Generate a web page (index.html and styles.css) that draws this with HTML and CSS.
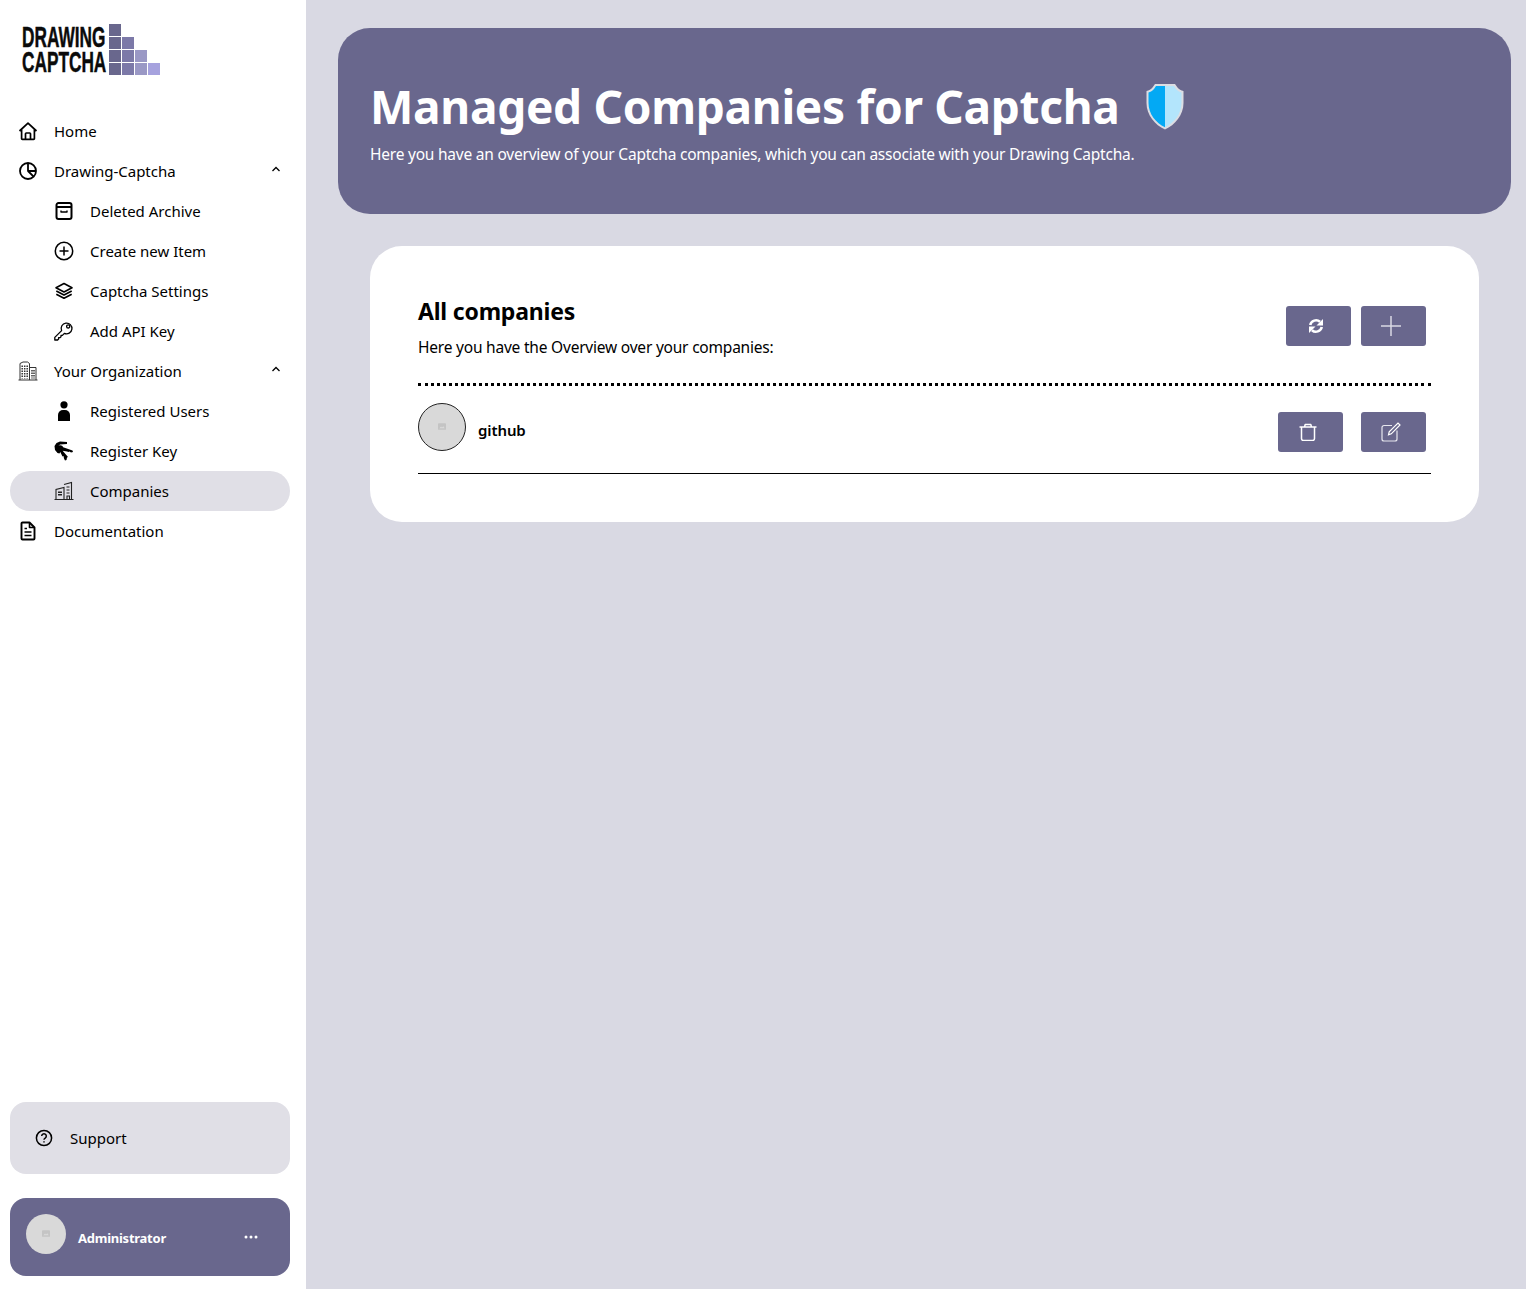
FILE: index.html
```html
<!DOCTYPE html>
<html lang="en">
<head>
<meta charset="utf-8">
<title>Managed Companies for Captcha</title>
<link rel="stylesheet" href="styles.css">
</head>
<body>
<div class="app">
  <aside class="sidebar">
    <div class="logo">
      <div class="logo-text"><span>DRAWING</span><span>CAPTCHA</span></div>
      <div class="logo-grid">
        <i class="c1"></i><i></i><i></i><i></i>
        <i class="c1"></i><i class="c2"></i><i></i><i></i>
        <i class="c1"></i><i class="c2"></i><i class="c3"></i><i></i>
        <i class="c1"></i><i class="c2"></i><i class="c3"></i><i class="c4"></i>
      </div>
    </div>
    <nav class="nav">
      <a class="item">
        <svg class="icon" viewBox="0 0 20 20" fill="none" stroke="#000" stroke-width="1.7" stroke-linejoin="round"><path d="M1.5 10 10 2.2 18.5 10M3.6 8.2V17.5a.8.8 0 0 0 .8.8h11.2a.8.8 0 0 0 .8-.8V8.2"/><path d="M7.5 18v-5.2a.8.8 0 0 1 .8-.8h3.4a.8.8 0 0 1 .8.8V18"/></svg>
        <span>Home</span>
      </a>
      <a class="item">
        <svg class="icon" viewBox="0 0 20 20" fill="none" stroke="#000" stroke-width="1.8" stroke-linejoin="round"><circle cx="10" cy="10" r="8"/><path d="M10 2v8h8M10 10l5.6 5.7"/></svg>
        <span>Drawing-Captcha</span>
        <svg class="chev" viewBox="0 0 10 6" fill="none" stroke="#000" stroke-width="1.3"><path d="M1.5 5 5 1.5 8.5 5"/></svg>
      </a>
      <a class="item sub">
        <svg class="icon" viewBox="0 0 20 20" fill="none" stroke="#000" stroke-width="2" stroke-linejoin="round"><path d="M4.500 2h11a2 2 0 0 1 2 2v12a2 2 0 0 1-2 2h-11a2 2 0 0 1-2-2V4a2 2 0 0 1 2-2Z"/><path d="M2.500 6h15"/><path d="M7 9.500v1.500h6V9.500" stroke-width="1.400"/></svg>
        <span>Deleted Archive</span>
      </a>
      <a class="item sub">
        <svg class="icon" viewBox="0 0 20 20" fill="none" stroke="#000" stroke-width="1.5"><circle cx="10" cy="10" r="8.7"/><path d="M10 5.5v9M5.5 10h9"/></svg>
        <span>Create new Item</span>
      </a>
      <a class="item sub">
        <svg class="icon" viewBox="0 0 20 20" fill="none" stroke="#000" stroke-width="1.6" stroke-linejoin="round"><path d="M10 2.500 18 6.800 10 11 2 6.800Z"/><path d="M2.300 10 10 14l7.700-4M2.300 13.200l7.700 4 7.700-4"/></svg>
        <span>Captcha Settings</span>
      </a>
      <a class="item sub">
        <svg class="icon" viewBox="0 0 20 20" fill="none" stroke="#000" stroke-width="1.300" stroke-linejoin="round"><path d="M7.600 9.600 .8 16.400v2.600h2.800l1-1v-1.400h1.500l.9-.9v-1.300h1.400l2-2a5.400 5.400 0 1 0-2.800-2.800Z"/><circle cx="14.200" cy="5.400" r="1.600"/></svg>
        <span>Add API Key</span>
      </a>
      <a class="item">
        <svg class="icon" viewBox="0 0 20 20" fill="none" stroke="#333" stroke-width="1"><path d="M2 19V2.500L5 1h4.500L11.500 2.500V19M11.500 6.500h6.500V19M.5 19h19"/><path stroke-dasharray="1.500 1" d="M4.200 4.500v13M6.700 4.500v13M9.200 4.500v13M14 9v8.500M16 9v8.500" stroke-width="1.500"/></svg>
        <span>Your Organization</span>
        <svg class="chev" viewBox="0 0 10 6" fill="none" stroke="#000" stroke-width="1.3"><path d="M1.500 5 5 1.500 8.500 5"/></svg>
      </a>
      <a class="item sub">
        <svg class="icon" viewBox="0 0 20 20"><circle cx="10" cy="3.800" r="3.600"/><path d="M4 20v-6a5 5 0 0 1 5-5h2a5 5 0 0 1 5 5v6Z"/></svg>
        <span>Registered Users</span>
      </a>
      <a class="item sub">
        <svg class="icon" viewBox="0 0 20 20"><path d="M13 1 6 .5 2.500 2 .5 5 1 9l2.500 3 2 .5L7 9.500 4.500 8 4 5.500 6 3.500l7-.500Z"/><circle cx="6" cy="7.500" r="3.200"/><path d="M7 5.500 18.500 9.500l.5 1.500-2 .5-1.500-1-1 .5-1.500-.5L7 9.500Z"/><path d="M5.500 9.500 8 9l6 7-1 .5-.5 2.500-1.500 .5-1-2-.5-2.500-1 .5Z"/></svg>
        <span>Register Key</span>
      </a>
      <a class="item sub active">
        <svg class="icon" viewBox="0 0 20 20" fill="none" stroke="#222" stroke-width="1.100"><path d="M.5 18.500h19M2 18V8.500L10 6.500V18M10 3.500 17.500 1.500V18M12.500 6h3M12.500 9h3M12.500 12h3M13 18v-3h2.500v3"/><path stroke-dasharray="1.500 1" stroke-width="4" d="M6 10.500v5"/></svg>
        <span>Companies</span>
      </a>
      <a class="item">
        <svg class="icon" viewBox="0 0 20 20" fill="none" stroke="#000" stroke-width="1.900" stroke-linejoin="round"><path d="M4.500 1.500h7l5 5v11a1 1 0 0 1-1 1h-11a1 1 0 0 1-1-1v-15a1 1 0 0 1 1-1Z"/><path d="M11.500 2v4.500H16M6.500 7.500h2.500M6.500 11h7M6.500 14.500h7" stroke-width="1.600"/></svg>
        <span>Documentation</span>
      </a>
    </nav>
    <div class="support">
      <svg class="help" viewBox="0 0 18 18" fill="none" stroke="#000" stroke-width="1.500"><circle cx="9" cy="9" r="7.600"/><path d="M6.700 7.100a2.300 2.300 0 1 1 3.500 2c-.8.500-1.200.9-1.200 1.700"/><path d="M9 12.300v1.300"/></svg>
      <span>Support</span>
    </div>
    <div class="user">
      <div class="avatar small">
        <svg class="ph" viewBox="0 0 12 10"><rect width="12" height="10" rx="1" fill="#c4c4c4"/><path d="M2 7.500 4.500 5l1.500 1.500L8 4.500l2 3Z" fill="#dadada"/></svg>
      </div>
      <strong>Administrator</strong>
      <svg class="dots" viewBox="0 0 14 4"><circle cx="2" cy="2" r="1.500"/><circle cx="7" cy="2" r="1.500"/><circle cx="12" cy="2" r="1.500"/></svg>
    </div>
  </aside>
  <main class="main">
    <header class="hero">
      <div class="hero-title">
        <h1>Managed Companies for Captcha</h1>
        <svg class="shield" viewBox="0 0 38 47">
          <path d="M9 1h20l2.500 3.500c1.500 1.800 3.500 2.800 6 3.500V20C37.500 32 29 42 19 46.500 9 42 .5 32 .5 20V8c2.500-.7 4.500-1.700 6-3.500Z" fill="#dcdde3"/>
          <path d="M19 3H10L8 6C6.500 8 4.500 9 2.500 9.500V20C2.500 31 10 40 19 44.300Z" fill="#03a9f4"/>
          <path d="M19 3h9l2 3c1.500 2 3.500 3 5.500 3.500V20C35.500 31 28 40 19 44.300Z" fill="#b3e5fc"/>
        </svg>
      </div>
      <p>Here you have an overview of your Captcha companies, which you can associate with your Drawing Captcha.</p>
    </header>
    <section class="card">
      <div class="card-head">
        <div>
          <h2>All companies</h2>
          <p>Here you have the Overview over your companies:</p>
        </div>
        <div class="actions top">
          <button class="btn" type="button">
            <svg class="i16" viewBox="0 0 16 16" fill="none" stroke="#fff" stroke-width="2.600"><path d="M2.200 7A6 6 0 0 1 12 3.800"/><path d="M13.800 9A6 6 0 0 1 4 12.200"/><path d="M15 1v6.500H8.500Z" fill="#fff" stroke="none"/><path d="M1 15V8.500H7.500Z" fill="#fff" stroke="none"/></svg>
          </button>
          <button class="btn" type="button">
            <svg class="i20" viewBox="0 0 20 20" fill="none" stroke="#d9d9e3" stroke-width="1.500"><path d="M10 0v20M0 10h20"/></svg>
          </button>
        </div>
      </div>
      <div class="row">
        <div class="avatar big">
          <svg class="ph" viewBox="0 0 12 10"><rect width="12" height="10" rx="1" fill="#c4c4c4"/><path d="M2 7.500 4.500 5l1.500 1.500L8 4.500l2 3Z" fill="#dadada"/></svg>
        </div>
        <strong class="name">github</strong>
        <div class="actions row-actions">
          <button class="btn" type="button">
            <svg class="i18" viewBox="0 0 18 18" fill="none" stroke="#fff" stroke-width="1.500" stroke-linejoin="round"><path d="M.5 4h17M5.500 4l.7-2.500h5.600L12.500 4M2.500 4v11.500a2 2 0 0 0 2 2h9a2 2 0 0 0 2-2V4"/></svg>
          </button>
          <button class="btn" type="button">
            <svg class="i20" viewBox="0 0 20 20" fill="none" stroke="#e6e6ee" stroke-width="1.200"><path d="M11 3.500H3a2 2 0 0 0-2 2V17a2 2 0 0 0 2 2h11a2 2 0 0 0 2-2V8.500"/><path d="M7.500 12.800 8.200 9.800 17 1l2 2-8.700 8.800Z" stroke="#fff"/></svg>
          </button>
        </div>
      </div>
    </section>
  </main>
</div>
</body>
</html>
```
FILE: styles.css
```css
* { box-sizing: border-box; }
html, body { margin: 0; height: 100%; overflow: hidden; }
body { font-family: "Noto Sans", "Open Sans", sans-serif; color: #000; font-size: 15px; }
.app { display: flex; height: 1289px; background: #d9d9e3; }
.sidebar { width: 306px; flex: none; background: #fff; display: flex; flex-direction: column; padding: 24px 16px 13px 10px; }
.logo { display: flex; align-items: flex-start; height: 52px; margin-left: 12px; margin-bottom: 35px; }
.logo-text { width: 87px; font-family: "Liberation Sans", sans-serif; font-weight: 700; font-size: 30px; line-height: 25px; color: #0b0b0b; padding-top: 0; -webkit-text-stroke: .5px #0b0b0b; }
.logo-text span { display: block; transform: scaleX(.575); transform-origin: left center; white-space: nowrap; }
.logo-grid { display: grid; grid-template-columns: repeat(4, 12px); grid-template-rows: repeat(4, 12px); gap: 1px; }
.logo-grid i { display: block; }
.logo-grid .c1 { background: #69678d; }
.logo-grid .c2 { background: #7c79a8; }
.logo-grid .c3 { background: #9a98c5; }
.logo-grid .c4 { background: #a6a2de; }
.nav { display: flex; flex-direction: column; flex: 1; }
.item { display: flex; align-items: center; height: 40px; padding: 0 8px; gap: 16px; border-radius: 20px; white-space: nowrap; position: relative; }
.item.sub { padding-left: 44px; }
.item.active { background: #e0dfe6; }
.icon { width: 20px; height: 20px; flex: none; }
.chev { width: 10px; height: 6px; position: absolute; right: 9px; top: 15px; }
.support { height: 72px; border-radius: 16px; background: #e0dfe6; display: flex; align-items: center; padding-left: 25px; gap: 17px; margin-bottom: 24px; }
.help { width: 18px; height: 18px; flex: none; }
.user { height: 78px; border-radius: 16px; background: #69678d; display: flex; align-items: flex-start; padding: 16px 16px 0; color: #fff; position: relative; }
.user strong { font-size: 13px; line-height: 20px; font-weight: 700; margin: 14px 0 0 12px; letter-spacing: -.25px; }
.dots { width: 14px; height: 4px; fill: #fff; position: absolute; left: 234px; top: 37px; }
.avatar { border-radius: 50%; background: #d9d9d9; display: flex; align-items: center; justify-content: center; flex: none; }
.avatar .ph { width: 8px; height: 7px; margin-bottom: 2px; }
.avatar.small { width: 40px; height: 40px; }
.avatar.big { width: 48px; height: 48px; border: 1px solid #222; }
.main { flex: 1; padding: 28px 15px 0 32px; }
.hero { height: 186px; border-radius: 32px; background: #69678d; color: #fff; padding: 46px 32px 0; }
.hero-title { display: flex; align-items: center; gap: 27px; height: 64px; }
.hero h1 { margin: -1px 0 0; font-size: 46px; line-height: 64px; font-weight: 700; letter-spacing: -.3px; }
.shield { width: 38px; height: 47px; flex: none; margin-left: -1px; }
.hero p { margin: 4px 0 0; font-size: 15.5px; line-height: 24px; letter-spacing: -.22px; }
.card { margin: 32px 32px 0; height: 276px; border-radius: 32px; background: #fff; padding: 48px; }
.card-head { display: flex; justify-content: space-between; align-items: flex-start; height: 92px; border-bottom: 3px dotted #000; }
.card h2 { margin: -1px 0 0; font-size: 23px; line-height: 36px; font-weight: 700; letter-spacing: -.2px; }
.card p { margin: 6px 0 0; font-size: 15.5px; line-height: 24px; letter-spacing: -.21px; }
.actions { display: flex; }
.actions.top { gap: 10px; margin: 12px 5px 0 0; }
.row { display: flex; align-items: flex-start; height: 88px; border-bottom: 1px solid #000; padding-top: 17px; }
.name { margin: 16px 0 0 12px; font-size: 15px; line-height: 22px; font-weight: 600; letter-spacing: -.1px; }
.row-actions { margin: 9px 5px 0 auto; gap: 18px; }
.btn { width: 65px; height: 40px; border: 0; border-radius: 3px; background: #69678d; display: flex; align-items: center; justify-content: center; padding: 0 5px 0 0; }
.i16 { width: 16px; height: 16px; }
.i18 { width: 18px; height: 18px; }
.i20 { width: 20px; height: 20px; }
```
